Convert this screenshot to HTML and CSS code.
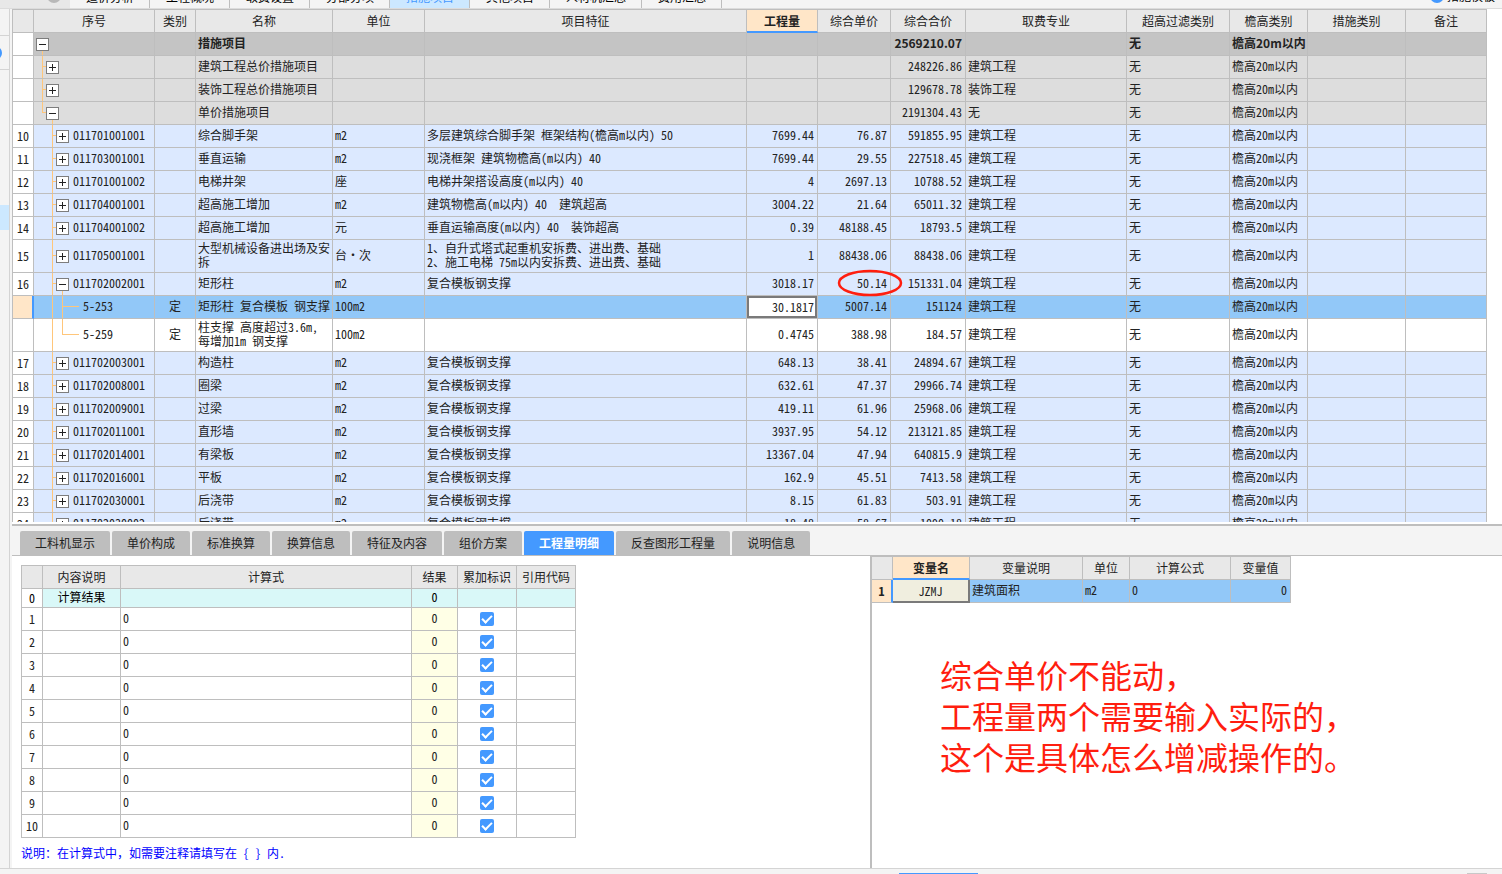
FILE: index.html
```html
<!DOCTYPE html>
<html lang="zh-CN">
<head>
<meta charset="utf-8">
<title>措施项目</title>
<link rel="stylesheet" href="styles.css">
</head>
<body>
<header class="topbar">
  <div class="topbar-lead"><span class="dot dot-gray"></span></div>
  <nav class="pages">
    <button class="page">造价分析</button>
    <button class="page">工程概况</button>
    <button class="page">取费设置</button>
    <button class="page">分部分项</button>
    <button class="page page-on">措施项目</button>
    <button class="page">其他项目</button>
    <button class="page">人材机汇总</button>
    <button class="page">费用汇总</button>
  </nav>
  <button class="template"><span class="dot dot-blue"></span>措施模板</button>
</header>
<div class="main">
  <aside class="rail">
    <div class="rail-head"></div>
    <div class="rail-tool"><span class="rail-dot"></span></div>
    <div class="rail-list"><div class="rail-sel"></div></div>
  </aside>
  <main class="content">
    <section class="grid-area">
      <table class="grid items">
        <colgroup><col class="c-no"><col class="c-seq"><col class="c-kind"><col class="c-name"><col class="c-unit"><col class="c-feat"><col class="c-qty"><col class="c-price"><col class="c-total"><col class="c-major"><col class="c-filter"><col class="c-eave"><col class="c-meas"><col class="c-note"></colgroup>
        <thead>
          <tr><th><th>序号<th>类别<th>名称<th>单位<th>项目特征<th class="hot">工程量<th>综合单价<th>综合合价<th>取费专业<th>超高过滤类别<th>檐高类别<th>措施类别<th>备注</tr>
        </thead>
        <tbody>
          <tr class="root"><td class="no"><td class="t0"><button class="tg minus" aria-label="折叠"></button><td><td>措施项目<td><td><td><td><td class="n">2569210.07<td><td>无<td>檐高20m以内<td><td></tr>
          <tr class="group"><td class="no"><td class="t1"><button class="tg plus" aria-label="展开"></button><td><td>建筑工程总价措施项目<td><td><td><td><td class="n">248226.86<td>建筑工程<td>无<td>檐高20m以内<td><td></tr>
          <tr class="group"><td class="no"><td class="t1"><button class="tg plus" aria-label="展开"></button><td><td>装饰工程总价措施项目<td><td><td><td><td class="n">129678.78<td>装饰工程<td>无<td>檐高20m以内<td><td></tr>
          <tr class="group"><td class="no"><td class="t1 last"><button class="tg minus" aria-label="折叠"></button><td><td>单价措施项目<td><td><td><td><td class="n">2191304.43<td>无<td>无<td>檐高20m以内<td><td></tr>
          <tr><td class="no">10<td class="t2"><button class="tg plus" aria-label="展开"></button>011701001001<td><td>综合脚手架<td>m2<td>多层建筑综合脚手架 框架结构(檐高m以内) 50<td class="n">7699.44<td class="n">76.87<td class="n">591855.95<td>建筑工程<td>无<td>檐高20m以内<td><td></tr>
          <tr><td class="no">11<td class="t2"><button class="tg plus" aria-label="展开"></button>011703001001<td><td>垂直运输<td>m2<td>现浇框架 建筑物檐高(m以内) 40<td class="n">7699.44<td class="n">29.55<td class="n">227518.45<td>建筑工程<td>无<td>檐高20m以内<td><td></tr>
          <tr><td class="no">12<td class="t2"><button class="tg plus" aria-label="展开"></button>011701001002<td><td>电梯井架<td>座<td>电梯井架搭设高度(m以内) 40<td class="n">4<td class="n">2697.13<td class="n">10788.52<td>建筑工程<td>无<td>檐高20m以内<td><td></tr>
          <tr><td class="no">13<td class="t2"><button class="tg plus" aria-label="展开"></button>011704001001<td><td>超高施工增加<td>m2<td>建筑物檐高(m以内) 40&nbsp; 建筑超高<td class="n">3004.22<td class="n">21.64<td class="n">65011.32<td>建筑工程<td>无<td>檐高20m以内<td><td></tr>
          <tr><td class="no">14<td class="t2"><button class="tg plus" aria-label="展开"></button>011704001002<td><td>超高施工增加<td>元<td>垂直运输高度(m以内) 40&nbsp; 装饰超高<td class="n">0.39<td class="n">48188.45<td class="n">18793.5<td>建筑工程<td>无<td>檐高20m以内<td><td></tr>
          <tr class="tall"><td class="no">15<td class="t2"><button class="tg plus" aria-label="展开"></button>011705001001<td><td>大型机械设备进出场及安拆<td>台·次<td>1、自升式塔式起重机安拆费、进出费、基础<br>2、施工电梯 75m以内安拆费、进出费、基础<td class="n">1<td class="n">88438.06<td class="n">88438.06<td>建筑工程<td>无<td>檐高20m以内<td><td></tr>
          <tr><td class="no">16<td class="t2 open"><button class="tg minus" aria-label="折叠"></button>011702002001<td><td>矩形柱<td>m2<td>复合模板钢支撑<td class="n">3018.17<td class="n marked">50.14<svg class="ring" viewBox="0 0 66 28" aria-hidden="true"><ellipse cx="33" cy="14" rx="31" ry="12"/></svg><td class="n">151331.04<td>建筑工程<td>无<td>檐高20m以内<td><td></tr>
          <tr class="picked"><td class="no"><td class="t3">5-253<td class="mid">定<td>矩形柱 复合模板 钢支撑<td>100m2<td><td class="edit"><input class="qty" aria-label="工程量" value="30.1817"><td class="n">5007.14<td class="n">151124<td>建筑工程<td>无<td>檐高20m以内<td><td></tr>
          <tr class="tall plain"><td class="no"><td class="t3 last">5-259<td class="mid">定<td>柱支撑 高度超过3.6m，<br>每增加1m 钢支撑<td>100m2<td><td class="n">0.4745<td class="n">388.98<td class="n">184.57<td>建筑工程<td>无<td>檐高20m以内<td><td></tr>
          <tr><td class="no">17<td class="t2"><button class="tg plus" aria-label="展开"></button>011702003001<td><td>构造柱<td>m2<td>复合模板钢支撑<td class="n">648.13<td class="n">38.41<td class="n">24894.67<td>建筑工程<td>无<td>檐高20m以内<td><td></tr>
          <tr><td class="no">18<td class="t2"><button class="tg plus" aria-label="展开"></button>011702008001<td><td>圈梁<td>m2<td>复合模板钢支撑<td class="n">632.61<td class="n">47.37<td class="n">29966.74<td>建筑工程<td>无<td>檐高20m以内<td><td></tr>
          <tr><td class="no">19<td class="t2"><button class="tg plus" aria-label="展开"></button>011702009001<td><td>过梁<td>m2<td>复合模板钢支撑<td class="n">419.11<td class="n">61.96<td class="n">25968.06<td>建筑工程<td>无<td>檐高20m以内<td><td></tr>
          <tr><td class="no">20<td class="t2"><button class="tg plus" aria-label="展开"></button>011702011001<td><td>直形墙<td>m2<td>复合模板钢支撑<td class="n">3937.95<td class="n">54.12<td class="n">213121.85<td>建筑工程<td>无<td>檐高20m以内<td><td></tr>
          <tr><td class="no">21<td class="t2"><button class="tg plus" aria-label="展开"></button>011702014001<td><td>有梁板<td>m2<td>复合模板钢支撑<td class="n">13367.04<td class="n">47.94<td class="n">640815.9<td>建筑工程<td>无<td>檐高20m以内<td><td></tr>
          <tr><td class="no">22<td class="t2"><button class="tg plus" aria-label="展开"></button>011702016001<td><td>平板<td>m2<td>复合模板钢支撑<td class="n">162.9<td class="n">45.51<td class="n">7413.58<td>建筑工程<td>无<td>檐高20m以内<td><td></tr>
          <tr><td class="no">23<td class="t2"><button class="tg plus" aria-label="展开"></button>011702030001<td><td>后浇带<td>m2<td>复合模板钢支撑<td class="n">8.15<td class="n">61.83<td class="n">503.91<td>建筑工程<td>无<td>檐高20m以内<td><td></tr>
          <tr><td class="no">24<td class="t2"><button class="tg plus" aria-label="展开"></button>011702030002<td><td>后浇带<td>m2<td>复合模板钢支撑<td class="n">18.48<td class="n">58.67<td class="n">1090.18<td>建筑工程<td>无<td>檐高20m以内<td><td></tr>
        </tbody>
      </table>
    </section>
    <nav class="tabs">
      <button class="tab">工料机显示</button>
      <button class="tab">单价构成</button>
      <button class="tab">标准换算</button>
      <button class="tab">换算信息</button>
      <button class="tab">特征及内容</button>
      <button class="tab">组价方案</button>
      <button class="tab tab-on">工程量明细</button>
      <button class="tab">反查图形工程量</button>
      <button class="tab">说明信息</button>
    </nav>
    <section class="detail">
      <div class="calc">
        <table class="grid calc-table">
          <colgroup><col class="k-no"><col class="k-desc"><col class="k-expr"><col class="k-res"><col class="k-sum"><col class="k-ref"></colgroup>
          <thead><tr><th><th>内容说明<th>计算式<th>结果<th>累加标识<th>引用代码</tr></thead>
          <tbody>
            <tr class="result"><td class="no">0<td class="mid">计算结果<td><td class="mid">0<td><td></tr>
            <tr><td class="no">1<td><td>0<td class="mid res">0<td class="chk"><input class="tick" type="checkbox" aria-label="累加标识 1" checked><td></tr>
            <tr><td class="no">2<td><td>0<td class="mid res">0<td class="chk"><input class="tick" type="checkbox" aria-label="累加标识 2" checked><td></tr>
            <tr><td class="no">3<td><td>0<td class="mid res">0<td class="chk"><input class="tick" type="checkbox" aria-label="累加标识 3" checked><td></tr>
            <tr><td class="no">4<td><td>0<td class="mid res">0<td class="chk"><input class="tick" type="checkbox" aria-label="累加标识 4" checked><td></tr>
            <tr><td class="no">5<td><td>0<td class="mid res">0<td class="chk"><input class="tick" type="checkbox" aria-label="累加标识 5" checked><td></tr>
            <tr><td class="no">6<td><td>0<td class="mid res">0<td class="chk"><input class="tick" type="checkbox" aria-label="累加标识 6" checked><td></tr>
            <tr><td class="no">7<td><td>0<td class="mid res">0<td class="chk"><input class="tick" type="checkbox" aria-label="累加标识 7" checked><td></tr>
            <tr><td class="no">8<td><td>0<td class="mid res">0<td class="chk"><input class="tick" type="checkbox" aria-label="累加标识 8" checked><td></tr>
            <tr><td class="no">9<td><td>0<td class="mid res">0<td class="chk"><input class="tick" type="checkbox" aria-label="累加标识 9" checked><td></tr>
            <tr><td class="no">10<td><td>0<td class="mid res">0<td class="chk"><input class="tick" type="checkbox" aria-label="累加标识 10" checked><td></tr>
          </tbody>
        </table>
        <p class="hint">说明：在计算式中，如需要注释请填写在<span class="half"> { } 内.</span></p>
      </div>
      <div class="vars">
        <table class="grid var-table">
          <colgroup><col class="v-no"><col class="v-name"><col class="v-desc"><col class="v-unit"><col class="v-expr"><col class="v-val"></colgroup>
          <thead><tr><th><th class="hot">变量名<th>变量说明<th>单位<th>计算公式<th>变量值</tr></thead>
          <tbody><tr class="picked"><td class="no">1<td class="mid var-cell">JZMJ<td>建筑面积<td>m2<td>0<td class="n">0</tr></tbody>
        </table>
        <p class="remark">综合单价不能动，<br>工程量两个需要输入实际的，<br>这个是具体怎么增减操作的。</p>
      </div>
    </section>
  </main>
</div>
<footer class="status"><span class="status-tab"></span><span class="status-end"></span></footer>
</body>
</html>
```

FILE: styles.css
```css
* { box-sizing: border-box; }

:root {
  --line: #bebebe;
  --bar: #f4f4f4;
  --head: #e8e8e8;
  --row: #dce9ff;
  --pick: #92c8f8;
  --blue: #4499ff;
  --peach: #ffe6c8;
  --tree: #ffc67a;
  --ink: #222;
}

body {
  margin: 0;
  height: 100vh;
  display: flex;
  flex-direction: column;
  overflow: hidden;
  background: #fff;
  color: var(--ink);
  font: 12px/14px "Noto Sans CJK SC", sans-serif;
}

button, input { font: inherit; color: inherit; }

/* top page tabs */
.topbar {
  flex: none;
  height: 9px;
  display: flex;
  align-items: flex-end;
  overflow: hidden;
  background: var(--bar);
  border-bottom: 1px solid #dcdcdc;
}
.topbar-lead {
  width: 70px;
  height: 8px;
  padding-left: 47px;
  display: flex;
  align-items: flex-end;
  background: var(--head);
}
.dot { width: 14px; height: 14px; border-radius: 50%; flex: none; }
.dot-gray { background: #b8b8b8; margin-bottom: 5px; }
.dot-blue { background: var(--blue); }
.pages { display: flex; flex: 1; }
.page {
  height: 22px;
  padding: 0 15px 0 16px;
  border: 0;
  border-right: 1px solid var(--line);
  background: var(--bar);
  color: #000;
  line-height: 18px;
  white-space: nowrap;
}
.page-on { background: #cce8ff; color: var(--blue); }
.template {
  display: flex;
  align-items: center;
  gap: 3px;
  height: 24px;
  padding: 0 7px 0 0;
  border: 0;
  background: none;
  color: #000;
  white-space: nowrap;
}

.main { flex: 1; min-height: 0; display: flex; background: var(--bar); }

/* left rail */
.rail {
  width: 10px;
  flex: none;
  margin-right: 2px;
  display: flex;
  flex-direction: column;
  border-right: 1px solid #d4d4d4;
  overflow: hidden;
}
.rail-head { height: 27px; border-bottom: 1px solid #d4d4d4; }
.rail-tool { height: 34px; border-bottom: 1px solid #d4d4d4; display: flex; align-items: center; }
.rail-dot { width: 10px; height: 12px; margin-left: -8px; border-radius: 50%; background: var(--blue); flex: none; }
.rail-list { padding-top: 135px; }
.rail-sel { height: 25px; background: #cce8ff; }

.content { flex: 1; min-width: 0; display: flex; flex-direction: column; background: #fff; }

/* shared grid look */
.half { font-feature-settings: "hwid"; }
.grid {
  table-layout: fixed;
  border-collapse: separate;
  border-spacing: 0;
  border: solid var(--line);
  border-width: 1px 0 0 1px;
  font-feature-settings: "hwid";
}
.grid th, .grid td {
  height: 23px;
  padding: 0 2px 2px;
  border: solid var(--line);
  border-width: 0 1px 1px 0;
  text-align: left;
  font-weight: 400;
  overflow: hidden;
}
.grid th { background: var(--head); text-align: center; padding: 0; }
.grid .hot {
  background: var(--peach);
  border-bottom: 2px solid var(--blue);
  font-weight: 700;
}
.grid .no { background: #fff; text-align: center; padding: 0; }
.grid .n { text-align: right; padding-right: 3px; }
.grid .mid { text-align: center; }
.grid .chk { padding: 0; }

/* bill items */
.grid-area { flex: 1; min-height: 0; overflow: hidden; border-bottom: 2px solid #fff; }
.items { width: calc(100% - 15px); }
.c-no { width: 21px; }
.c-seq { width: 121px; }
.c-kind { width: 41px; }
.c-name { width: 137px; }
.c-unit { width: 92px; }
.c-feat { width: 322px; }
.c-qty { width: 71px; }
.c-price { width: 73px; }
.c-total { width: 75px; }
.c-major { width: 161px; }
.c-filter { width: 103px; }
.c-eave { width: 78px; }
.c-meas { width: 98px; }
.c-note { width: 81px; }

.items tr { --mid: 10px; }
.items .tall { --mid: 15px; }
.items td { background-color: var(--row); }
.items .root td { background-color: #c4c4c4; font-weight: 700; font-feature-settings: normal; white-space: nowrap; }
.items .group td { background-color: #ddd; }
.items .tall td { height: 33px; }
.items .plain td { background-color: #fff; }
.items tr .no { background-color: #fff; }
.grid .picked td { background-color: var(--pick); }
.grid .picked .no { background-color: var(--peach); }
.items .picked .no { border-right: 2px solid var(--blue); }

/* tree column: guide lines are drawn as cell backgrounds */
.items .t0, .items .t1, .items .t2, .items .t3 {
  background-repeat: no-repeat;
  white-space: nowrap;
}
.items .t0 {
  padding-left: 2px;
  background-image: linear-gradient(var(--tree), var(--tree));
  background-size: 1px 50%;
  background-position: 8px 100%;
}
.items .t1 {
  padding-left: 12px;
  background-image: linear-gradient(var(--tree), var(--tree)), linear-gradient(var(--tree), var(--tree));
  background-size: 1px 100%, 4px 1px;
  background-position: 8px 0, 8px var(--mid);
}
.items .t1.last {
  background-image: linear-gradient(var(--tree), var(--tree)), linear-gradient(var(--tree), var(--tree)), linear-gradient(var(--tree), var(--tree));
  background-size: 1px 50%, 4px 1px, 1px 50%;
  background-position: 8px 0, 8px var(--mid), 18px 100%;
}
.items .t2 {
  padding-left: 22px;
  background-image: linear-gradient(var(--tree), var(--tree)), linear-gradient(var(--tree), var(--tree));
  background-size: 1px 100%, 4px 1px;
  background-position: 18px 0, 18px var(--mid);
}
.items .t2.open {
  background-image: linear-gradient(var(--tree), var(--tree)), linear-gradient(var(--tree), var(--tree)), linear-gradient(var(--tree), var(--tree));
  background-size: 1px 100%, 4px 1px, 1px 50%;
  background-position: 18px 0, 18px var(--mid), 28px 100%;
}
.items .t3 {
  padding-left: 49px;
  background-image: linear-gradient(var(--tree), var(--tree)), linear-gradient(var(--tree), var(--tree)), linear-gradient(var(--tree), var(--tree));
  background-size: 1px 100%, 1px 100%, 17px 1px;
  background-position: 18px 0, 28px 0, 28px var(--mid);
}
.items .t3.last { background-size: 1px 100%, 1px 50%, 17px 1px; }

.tg {
  width: 13px;
  height: 13px;
  margin: 0 4px 0 0;
  padding: 0;
  border: 1px solid #7d7d7d;
  vertical-align: -2px;
  background: #fff linear-gradient(#222, #222) center / 7px 1px no-repeat;
}
.tg.plus {
  background-image: linear-gradient(#222, #222), linear-gradient(#222, #222);
  background-size: 7px 1px, 1px 7px;
}

.items .edit { padding: 0; }
.qty {
  display: block;
  width: 100%;
  height: 22px;
  padding: 0 1px 2px;
  border: 2px solid #7a7a7a;
  border-radius: 0;
  background: #fff;
  text-align: right;
  font-feature-settings: "hwid";
}
.items .marked { position: relative; overflow: visible; }
.ring {
  position: absolute;
  top: -4px;
  right: -13px;
  width: 66px;
  height: 28px;
  z-index: 1;
  fill: none;
  stroke: #ff1e0f;
  stroke-width: 2.5;
}

/* lower tabs */
.tabs {
  flex: none;
  display: flex;
  gap: 2px;
  padding: 5px 8px 0;
  background: var(--bar);
  border-top: 2px solid var(--line);
  border-bottom: 1px solid var(--line);
}
.tab {
  height: 24px;
  padding: 0 15px;
  border: 0;
  border-radius: 2px 2px 0 0;
  background: #bebebe;
  white-space: nowrap;
}
.tab-on { background: var(--blue); color: #fff; font-weight: 700; }

.detail { flex: none; display: flex; }
.calc { flex: 0 0 58%; max-width: 858px; padding: 9px 9px 8px; }
.calc-table { width: 555px; }
.k-no { width: 21px; }
.k-desc { width: 78px; }
.k-expr { width: 291px; }
.k-res { width: 46px; }
.k-sum { width: 59px; }
.k-ref { width: 59px; }
.calc-table .result td { height: 19px; color: #000; }
.calc-table .result td:not(.no) { background: #d9f8f8; }
.grid .res { background: #ffffe6; }

.tick {
  appearance: none;
  display: block;
  width: 14px;
  height: 14px;
  margin: 0 auto;
  border-radius: 2px;
  background: var(--blue);
}
.tick:checked::after {
  content: "";
  display: block;
  box-sizing: border-box;
  width: 6px;
  height: 10px;
  margin: 1px 0 0 4px;
  border: solid #fff;
  border-width: 0 2px 2px 0;
  rotate: 45deg;
}
.hint { margin: 8px 0 0; color: #00f; }

.vars { flex: 1; min-width: 0; border-left: 2px solid var(--line); }
.var-table { width: 419px; border-left: 0; }
.v-no { width: 21px; }
.v-name { width: 77px; }
.v-desc { width: 113px; }
.v-unit { width: 47px; }
.v-expr { width: 101px; }
.v-val { width: 60px; }
.var-table .no { font-weight: 700; border-right: 2px solid var(--blue); }
.grid .picked .var-cell {
  background: #f0eedf;
  padding-bottom: 0;
  border-right: 2px solid #7a7a7a;
  border-bottom: 2px solid #7a7a7a;
}
.remark {
  margin: 51px 0 0 68px;
  color: #ff1e0f;
  font-size: 32px;
  line-height: 41px;
}

.status {
  flex: none;
  height: 6px;
  padding: 4px 15px 0 899px;
  display: flex;
  justify-content: space-between;
  background: var(--bar);
  border-top: 1px solid #d4d4d4;
}
.status-tab { width: 79px; height: 1px; background: var(--blue); }
.status-end { width: 20px; height: 1px; background: #c8c8c8; }
```
